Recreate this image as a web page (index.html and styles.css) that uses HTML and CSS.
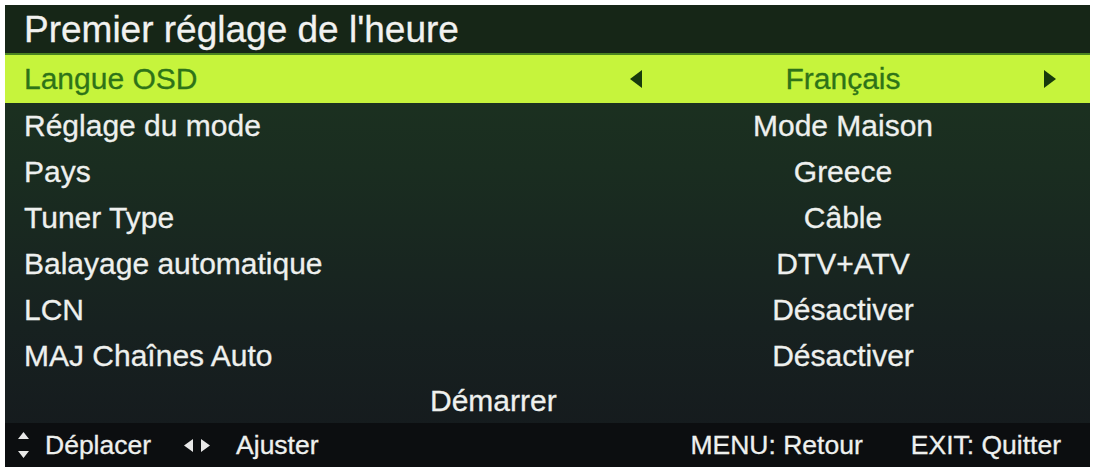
FILE: index.html
```html
<!DOCTYPE html>
<html lang="fr">
<head>
<meta charset="utf-8">
<title>Premier réglage de l'heure</title>
<link rel="stylesheet" href="styles.css">
</head>
<body>
<div class="panel">
  <div class="title">Premier réglage de l'heure</div>
  <div class="row sel">
    <div class="label">Langue OSD</div>
    <div class="value">
      <svg class="arr" viewBox="0 0 12 18" width="12" height="18"><path d="M12 0 L0 9 L12 18 Z"/></svg>
      <span class="vtext">Français</span>
      <svg class="arr" viewBox="0 0 12 18" width="12" height="18"><path d="M0 0 L12 9 L0 18 Z"/></svg>
    </div>
  </div>
  <div class="row"><div class="label">Réglage du mode</div><div class="value"><span class="vtext">Mode Maison</span></div></div>
  <div class="row"><div class="label">Pays</div><div class="value"><span class="vtext">Greece</span></div></div>
  <div class="row"><div class="label">Tuner Type</div><div class="value"><span class="vtext">Câble</span></div></div>
  <div class="row"><div class="label">Balayage automatique</div><div class="value"><span class="vtext">DTV+ATV</span></div></div>
  <div class="row"><div class="label">LCN</div><div class="value"><span class="vtext">Désactiver</span></div></div>
  <div class="row"><div class="label">MAJ Chaînes Auto</div><div class="value"><span class="vtext">Désactiver</span></div></div>
  <div class="start">Démarrer</div>
  <div class="footer">
    <div class="hint">
      <svg class="ud" viewBox="0 0 11 26" width="11" height="26"><path d="M5.5 0 L11 7 L0 7 Z M0 19 L11 19 L5.5 26 Z"/></svg>
      <span>Déplacer</span>
    </div>
    <div class="hint lr-hint">
      <svg class="lr" viewBox="0 0 26 13" width="26" height="13"><path d="M9 0 L0 6.5 L9 13 Z M17 0 L26 6.5 L17 13 Z"/></svg>
      <span>Ajuster</span>
    </div>
    <div class="spacer"></div>
    <div class="hint">MENU: Retour</div>
    <div class="hint exit">EXIT: Quitter</div>
  </div>
</div>
</body>
</html>
```
FILE: styles.css
```css
html, body {
  margin: 0;
  padding: 0;
  background: #ffffff;
}

body {
  padding: 5px 5px 6px 5px;
  font-family: "Liberation Sans", Arial, sans-serif;
  color: #eef0ee;
}

.panel {
  width: 1085px;
  height: 462px;
  display: flex;
  flex-direction: column;
  background: linear-gradient(180deg, #1d3520 0%, #1a2d20 35%, #172120 70%, #15191d 100%);
  -webkit-text-stroke: 0.3px currentColor;
}

.title {
  height: 48px;
  line-height: 50px;
  padding-left: 19px;
  font-size: 37px;
  background: #162617;
  color: #f2f2f0;
}

.row {
  height: 46px;
  display: flex;
  align-items: center;
  font-size: 30px;
}

.row.sel {
  height: 48px;
  border-top: 2px solid #4a8420;
  background: #c6f43c;
  color: #2e7318;
}

.label {
  flex: 1;
  padding-left: 19px;
}

.value {
  width: 426px;
  margin-right: 34px;
  display: flex;
  align-items: center;
}

.vtext {
  flex: 1;
  text-align: center;
}

.arr {
  fill: #173a0c;
}

.start {
  height: 44px;
  line-height: 44px;
  font-size: 30px;
  padding-left: 425px;
}

.footer {
  height: 44px;
  display: flex;
  align-items: center;
  background: #0c0e10;
  font-size: 26.5px;
  padding-left: 13px;
  padding-right: 29px;
}

.hint {
  display: flex;
  align-items: center;
}

.ud {
  fill: #e8e8e8;
  margin-right: 16px;
}

.lr-hint {
  margin-left: 33px;
}

.lr {
  fill: #e8e8e8;
  margin-right: 26px;
}

.spacer {
  flex: 1;
}

.exit {
  margin-left: 48px;
}
```
